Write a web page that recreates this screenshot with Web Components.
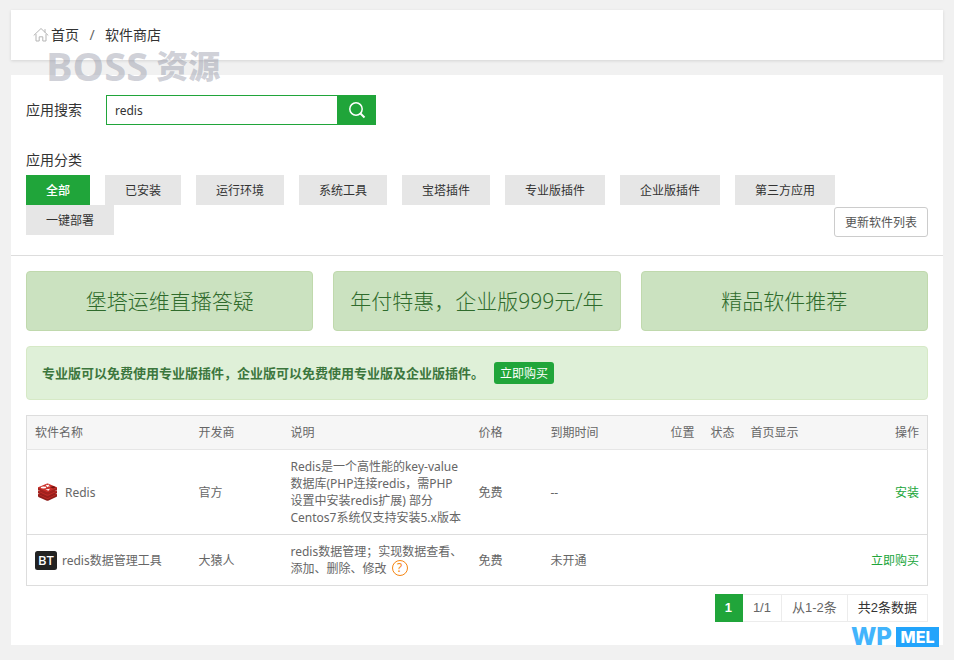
<!DOCTYPE html>
<html lang="zh-CN">
<head>
<meta charset="UTF-8">
<meta name="viewport" content="width=device-width, initial-scale=1">
<title>软件商店</title>
<style>
  * { box-sizing: border-box; }
  body {
    margin: 0;
    background: #f1f1f1;
    color: #333;
    font-family: "Noto Sans", "Noto Sans CJK SC", sans-serif;
    font-size: 12px;
    line-height: 17px;
  }
</style>
</head>
<body>
<store-page>
  <bread-crumb current="软件商店"></bread-crumb>
  <store-panel>
    <app-search slot="filters" value="redis"></app-search>
    <category-tabs slot="filters" items="全部,已安装,运行环境,系统工具,宝塔插件,专业版插件,企业版插件,第三方应用,一键部署">应用分类</category-tabs>
    <promo-row>
      <promo-card>堡塔运维直播答疑</promo-card>
      <promo-card>年付特惠，企业版999元/年</promo-card>
      <promo-card>精品软件推荐</promo-card>
    </promo-row>
    <notice-bar>专业版可以免费使用专业版插件，企业版可以免费使用专业版及企业版插件。</notice-bar>
    <software-table></software-table>
    <page-pager></page-pager>
  </store-panel>
  <boss-mark></boss-mark>
  <wp-mark></wp-mark>
</store-page>

<script>
class StorePage extends HTMLElement {
  connectedCallback() {
    this.attachShadow({ mode: "open" });
    this.shadowRoot.innerHTML = `
      <style>
        :host {
          display: flex;
          flex-direction: column;
          gap: 15px;
          position: relative;
          padding: 10px 11px 15px;
        }
      </style>
      <slot></slot>
    `;
  }
}
customElements.define("store-page", StorePage);

class BreadCrumb extends HTMLElement {
  connectedCallback() {
    this.attachShadow({ mode: "open" });
    this.shadowRoot.innerHTML = `
      <style>
        :host {
          display: block;
          background: #fff;
          box-shadow: 0 1px 3px rgba(0,0,0,0.12);
          font-size: 14px;
        }
        nav {
          display: flex;
          align-items: center;
          padding: 15px 22px;
          line-height: 20px;
        }
        a {
          display: flex;
          align-items: center;
          gap: 2px;
          color: #333;
          text-decoration: none;
        }
        i {
          width: 26px;
          text-align: center;
          font-style: normal;
          color: #666;
        }
      </style>
      <nav>
        <a href="#">
          <svg width="16" height="16" viewBox="0 0 16 16" fill="none" stroke="#b5b5b5" stroke-linejoin="round" stroke-linecap="round">
            <path d="M1 8.2 8 1.5l7 6.7M12 2.5v2.6"/>
            <path d="M3 7.5v6.5h3.2V9.8h3.6V14H13V7.5"/>
          </svg>
          首页
        </a>
        <i>/</i>
        <span>${this.getAttribute("current")}</span>
      </nav>
    `;
  }
}
customElements.define("bread-crumb", BreadCrumb);

class StorePanel extends HTMLElement {
  connectedCallback() {
    this.attachShadow({ mode: "open" });
    this.shadowRoot.innerHTML = `
      <style>
        :host {
          display: block;
          background: #fff;
        }
        .filters {
          padding: 20px 15px 18px;
          border-bottom: 1px solid #ddd;
        }
        .content {
          display: flex;
          flex-direction: column;
          gap: 15px;
          padding: 15px 15px 23px;
        }
      </style>
      <div class="filters"><slot name="filters"></slot></div>
      <div class="content"><slot></slot></div>
    `;
  }
}
customElements.define("store-panel", StorePanel);

class AppSearch extends HTMLElement {
  connectedCallback() {
    this.attachShadow({ mode: "open" });
    this.shadowRoot.innerHTML = `
      <style>
        :host {
          display: block;
          margin-bottom: 25px;
        }
        form {
          display: flex;
          align-items: center;
          height: 30px;
        }
        label {
          width: 80px;
          font-size: 14px;
          line-height: 20px;
        }
        input {
          box-sizing: border-box;
          width: 232px;
          height: 30px;
          padding: 0 8px;
          border: 1px solid #20a53a;
          border-radius: 0;
          outline: 0;
          color: #333;
          font: inherit;
          font-size: 12px;
        }
        button {
          display: flex;
          align-items: center;
          justify-content: center;
          width: 38px;
          height: 30px;
          padding: 0;
          border: 0;
          background: #20a53a;
        }
      </style>
      <form>
        <label for="q">应用搜索</label>
        <input id="q" type="text" value="${this.getAttribute("value")}">
        <button type="button" aria-label="搜索">
          <svg width="18" height="18" viewBox="0 0 18 18" fill="none" stroke="#fff" stroke-width="1.5">
            <circle cx="8" cy="8" r="6.2"/>
            <path d="m12.5 12.5 4 4" stroke-width="2"/>
          </svg>
        </button>
      </form>
    `;
  }
}
customElements.define("app-search", AppSearch);

class CategoryTabs extends HTMLElement {
  connectedCallback() {
    const items = this.getAttribute("items").split(",");
    this.attachShadow({ mode: "open" });
    this.shadowRoot.innerHTML = `
      <style>
        :host { display: block; }
        .title {
          font-size: 14px;
          line-height: 20px;
          padding-bottom: 5px;
        }
        /* tabs and the update button share one grid cell */
        .area {
          display: grid;
          min-height: 62px;
        }
        .tabs {
          grid-area: 1 / 1;
          display: flex;
          flex-wrap: wrap;
          align-content: flex-start;
          column-gap: 15px;
        }
        button {
          font: inherit;
          color: #333;
          cursor: pointer;
        }
        .tabs button {
          height: 30px;
          padding: 0 20px;
          border: 0;
          background: #e6e6e6;
        }
        .tabs button.on {
          background: #20a53a;
          color: #fff;
          font-weight: 500;
        }
        .update {
          grid-area: 1 / 1;
          place-self: end;
          height: 30px;
          padding: 0 10px;
          border: 1px solid #ccc;
          border-radius: 3px;
          background: #fff;
          color: #555;
        }
      </style>
      <div class="title"><slot></slot></div>
      <div class="area">
        <div class="tabs">
          ${items.map((t, i) => `<button type="button"${i ? "" : ' class="on"'}>${t}</button>`).join("")}
        </div>
        <button type="button" class="update">更新软件列表</button>
      </div>
    `;
  }
}
customElements.define("category-tabs", CategoryTabs);

class PromoRow extends HTMLElement {
  connectedCallback() {
    this.attachShadow({ mode: "open" });
    this.shadowRoot.innerHTML = `
      <style>
        :host {
          display: grid;
          grid-template-columns: repeat(3, 1fr);
          gap: 20px;
        }
      </style>
      <slot></slot>
    `;
  }
}
customElements.define("promo-row", PromoRow);

class PromoCard extends HTMLElement {
  connectedCallback() {
    this.attachShadow({ mode: "open" });
    this.shadowRoot.innerHTML = `
      <style>
        :host { display: block; }
        a {
          display: flex;
          align-items: center;
          justify-content: center;
          height: 58px;
          border: 1px solid #c0d9ad;
          border-radius: 4px;
          background: #cbe2c0;
          color: #2f6b2c;
          font-size: 21px;
          font-weight: 300;
          line-height: 30px;
          white-space: nowrap;
          text-decoration: none;
        }
      </style>
      <a href="#"><slot></slot></a>
    `;
  }
}
customElements.define("promo-card", PromoCard);

class NoticeBar extends HTMLElement {
  connectedCallback() {
    this.attachShadow({ mode: "open" });
    this.shadowRoot.innerHTML = `
      <style>
        :host {
          display: flex;
          align-items: center;
          gap: 10px;
          padding: 15px;
          border: 1px solid #d6e9c6;
          border-radius: 4px;
          background: #dff0d8;
          color: #3c763d;
          font-size: 13px;
          font-weight: 700;
        }
        button {
          height: 22px;
          padding: 0 6px;
          border: 0;
          border-radius: 3px;
          background: #20a53a;
          color: #fff;
          font: inherit;
          font-size: 12px;
          font-weight: 400;
        }
      </style>
      <span><slot></slot></span>
      <button type="button">立即购买</button>
    `;
  }
}
customElements.define("notice-bar", NoticeBar);

class SoftwareTable extends HTMLElement {
  connectedCallback() {
    this.attachShadow({ mode: "open" });
    this.shadowRoot.innerHTML = `
      <style>
        :host { display: block; }
        table {
          width: 100%;
          table-layout: fixed;
          border-collapse: collapse;
          border: 1px solid #ddd;
          color: #666;
        }
        th, td {
          padding: 8px;
          border-bottom: 1px solid #ddd;
          text-align: left;
          font-weight: 400;
        }
        th {
          background: #f6f6f6;
          border-color: #e6e6e6;
        }
        th:last-child, td:last-child { text-align: right; }
        .name {
          display: flex;
          align-items: center;
        }
        .redis {
          margin: 0 7px 0 2px;
        }
        .bt {
          margin-right: 5px;
        }
        a {
          color: #20a53a;
          text-decoration: none;
        }
        .help {
          display: inline-block;
          box-sizing: border-box;
          width: 16px;
          height: 16px;
          margin-left: 2px;
          border: 1px solid #f58512;
          border-radius: 50%;
          color: #f58512;
          line-height: 14px;
          text-align: center;
          vertical-align: top;
        }
        .col-name { width: 164px; }
        .col-dev { width: 92px; }
        .col-desc { width: 188px; }
        .col-price { width: 72px; }
        .col-time { width: 120px; }
        .col-small { width: 40px; }
      </style>
      <table>
        <colgroup>
          <col class="col-name"><col class="col-dev"><col class="col-desc">
          <col class="col-price"><col class="col-time">
          <col class="col-small"><col class="col-small"><col><col>
        </colgroup>
        <thead>
          <tr>
            <th>软件名称</th><th>开发商</th><th>说明</th><th>价格</th><th>到期时间</th>
            <th>位置</th><th>状态</th><th>首页显示</th><th>操作</th>
          </tr>
        </thead>
        <tbody>
          <tr>
            <td>
              <div class="name">
                <svg class="redis" width="21" height="18" viewBox="0 0 21 18">
                  <path fill="#8f1d1a" d="M1 11v2.3c0 .4.4.6.9.9l7.4 3.2c.9.4 1.5.4 2.4 0l7.4-3.4c.5-.2.9-.5.9-.8V11z"/>
                  <path fill="#b92a25" d="m1 10.7 8.3 3.8c.9.4 1.5.4 2.4 0l8.3-3.8v1l-8.3 4c-.9.4-1.5.4-2.4 0L1 11.8z"/>
                  <path fill="#98201d" d="M1 7.7v2.5l8.3 3.8c.9.4 1.5.4 2.4 0l8.3-3.8V7.7z"/>
                  <path fill="#c02c27" d="m1 7.4 8.3 3.8c.9.4 1.5.4 2.4 0L20 7.4v1.2l-8.3 3.9c-.9.4-1.5.4-2.4 0L1 8.6z"/>
                  <path fill="#a3231f" d="M1 4.6v2.3l8.3 3.8c.9.4 1.5.4 2.4 0L20 6.9V4.6z"/>
                  <path fill="#cb302a" d="M1.8 4 9.5.8c.7-.3 1.3-.3 2 0L19.2 4c1 .4 1 .9 0 1.3l-7.7 3.4c-.7.3-1.3.3-2 0L1.8 5.3C.8 4.9.8 4.4 1.8 4z"/>
                  <path fill="#fff" d="m9 1.8 1.5.3 1.7-.5-.5 1 1.6.7-2 .1-.8.9-.7-1-1.8-.1 1.4-.6z"/>
                  <ellipse fill="#fff" cx="6.5" cy="4.6" rx="2.8" ry="1"/>
                  <path fill="#fff" d="m8.4 6.6 4.6-.8-1.5 2z"/>
                  <path fill="#751410" d="m13.2 4.2 3-1.2 2.8 1.2-2.9 1.2z"/>
                </svg>
                Redis
              </div>
            </td>
            <td>官方</td>
            <td>Redis是一个高性能的key-value数据库(PHP连接redis，需PHP设置中安装redis扩展) 部分Centos7系统仅支持安装5.x版本</td>
            <td>免费</td>
            <td>--</td>
            <td></td><td></td><td></td>
            <td><a href="#">安装</a></td>
          </tr>
          <tr>
            <td>
              <div class="name">
                <svg class="bt" width="22" height="19" viewBox="0 0 22 19">
                  <rect width="22" height="19" rx="2.5" fill="#222"/>
                  <text x="11" y="14" text-anchor="middle" font-size="13" font-weight="500" fill="#fff">BT</text>
                </svg>
                redis数据管理工具
              </div>
            </td>
            <td>大猿人</td>
            <td>redis数据管理；实现数据查看、添加、删除、修改 <span class="help">?</span></td>
            <td>免费</td>
            <td>未开通</td>
            <td></td><td></td><td></td>
            <td><a href="#">立即购买</a></td>
          </tr>
        </tbody>
      </table>
    `;
  }
}
customElements.define("software-table", SoftwareTable);

class PagePager extends HTMLElement {
  connectedCallback() {
    this.attachShadow({ mode: "open" });
    this.shadowRoot.innerHTML = `
      <style>
        :host {
          display: flex;
          justify-content: flex-end;
          margin-top: -7px;
          color: #666;
          font-family: "Liberation Sans", "Noto Sans CJK SC", sans-serif;
          font-size: 13px;
        }
        span {
          padding: 0 10px;
          border: 1px solid #ececec;
          border-left: 0;
          line-height: 26px;
        }
        .current {
          border-color: #20a53a;
          background: #20a53a;
          color: #fff;
          font-weight: 700;
        }
        .total { color: #333; }
      </style>
      <span class="current">1</span>
      <span>1/1</span>
      <span>从1-2条</span>
      <span class="total">共2条数据</span>
    `;
  }
}
customElements.define("page-pager", PagePager);

class BossMark extends HTMLElement {
  connectedCallback() {
    this.attachShadow({ mode: "open" });
    this.shadowRoot.innerHTML = `
      <style>
        :host {
          display: flex;
          align-items: center;
          gap: 8px;
          position: absolute;
          left: 46px;
          top: 46px;
          color: rgba(140,143,160,0.42);
          font-size: 40px;
          font-weight: 700;
          line-height: 40px;
          pointer-events: none;
        }
        .cn {
          font-size: 32px;
          font-weight: 900;
        }
      </style>
      <span>BOSS</span>
      <span class="cn">资源</span>
    `;
  }
}
customElements.define("boss-mark", BossMark);

class WpMark extends HTMLElement {
  connectedCallback() {
    this.attachShadow({ mode: "open" });
    this.shadowRoot.innerHTML = `
      <style>
        :host {
          display: flex;
          align-items: center;
          gap: 4px;
          position: absolute;
          right: 15px;
          bottom: 13px;
          color: #42b4fc;
          font-family: Inter, "Open Sans", sans-serif;
          font-size: 24px;
          font-weight: 800;
          line-height: 20px;
          pointer-events: none;
        }
        .box {
          width: 43px;
          background: #22a4fb;
          color: #fff;
          font-size: 16px;
          text-align: center;
        }
      </style>
      <span>WP</span>
      <span class="box">MEL</span>
    `;
  }
}
customElements.define("wp-mark", WpMark);
</script>
</body>
</html>
